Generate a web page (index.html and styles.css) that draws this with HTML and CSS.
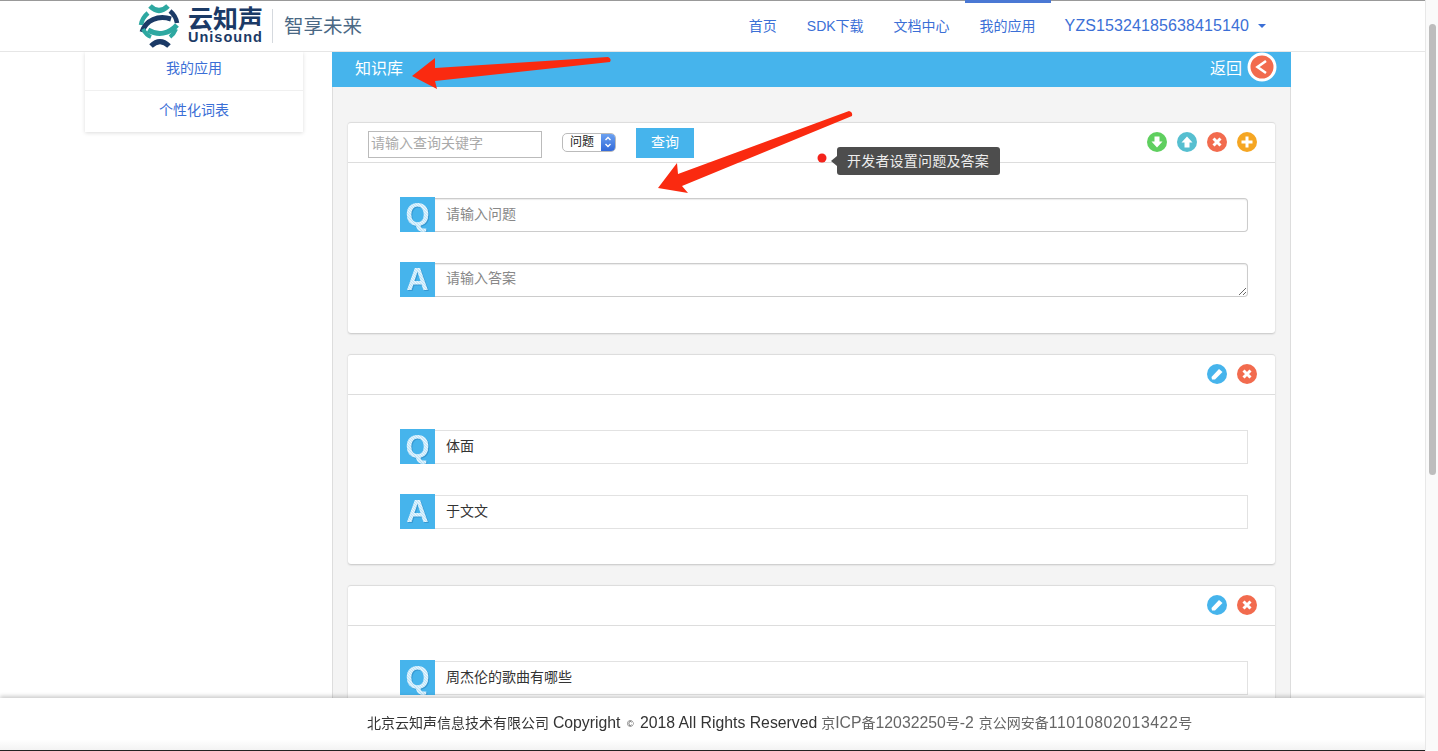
FILE: index.html
```html
<html>
  <head>
    <meta charset="utf-8">
    <link rel="stylesheet" href="styles.css">
    <title>知识库</title>
  </head>
  <body>
    <svg class="defs" width="0" height="0">
      <defs>
        <pattern id="hatch" width="2" height="2" patternUnits="userSpaceOnUse" patternTransform="rotate(45)">
          <rect width="2" height="2" fill="#f0f9fe"/>
          <rect width="2" height=".5" fill="#7ccaf2"/>
        </pattern>
      </defs>
    </svg>

    <div class="navbar">
      <a class="logo" href="#">
        <svg class="logo-mark" width="42" height="44" viewBox="0 0 42 44">
          <path d="M12 2 Q21 11 30 2" fill="none" stroke="#2ea8a1" stroke-width="5"/>
          <path d="M13 42 Q22 33 31 42" fill="none" stroke="#1b3a66" stroke-width="5"/>
          <path d="M10 9 Q4 14 3 21" fill="none" stroke="#2ea8a1" stroke-width="4.500"/>
          <path d="M4 28 C8 16 20 11 33 15" fill="none" stroke="#1b3a66" stroke-width="5"/>
          <path d="M32 7 Q38 12 39 19" fill="none" stroke="#1b3a66" stroke-width="4.500"/>
          <path d="M10 26 C20 32 31 30 39 21" fill="none" stroke="#2ea8a1" stroke-width="5"/>
          <path d="M5 25 Q8 31 13 33" fill="none" stroke="#2ea8a1" stroke-width="4"/>
          <path d="M38 25 Q36 30 32 33" fill="none" stroke="#2ea8a1" stroke-width="4"/>
        </svg>
        <span class="logo-name">
          <span class="logo-cn">云知声</span>
          <span class="logo-en">Unisound</span>
        </span>
        <span class="logo-slogan">智享未来</span>
      </a>
      <ul class="nav">
        <li><a href="#">首页</a></li>
        <li><a href="#">SDK下载</a></li>
        <li><a href="#">文档中心</a></li>
        <li class="active"><a href="#">我的应用</a></li>
        <li class="user"><a href="#">YZS15324185638415140<span class="caret"></span></a></li>
      </ul>
    </div>

    <div class="page">
      <div class="sidebar">
        <a href="#">我的应用</a>
        <a href="#">个性化词表</a>
      </div>
      <div class="main">
        <div class="main-head">
          <span>知识库</span>
          <a class="back" href="#">
            返回
            <svg width="30" height="30" viewBox="0 0 30 30">
              <circle cx="15" cy="15" r="13" fill="#f26b4e" stroke="#fff" stroke-width="3"/>
              <path d="M19 9 L10.500 15 L19 21" fill="none" stroke="#fff" stroke-width="2.600"/>
            </svg>
          </a>
        </div>
        <div class="main-body">

          <div class="card card-edit">
            <div class="card-head">
              <input class="search" placeholder="请输入查询关键字">
              <div class="fake-select">
                <span>问题</span>
                <i>
                  <svg width="14" height="18" viewBox="0 0 14 18"><path d="M4.500 7 L7 4.500 L9.500 7 M4.500 11 L7 13.500 L9.500 11" fill="none" stroke="#fff" stroke-width="1.400"/></svg>
                </i>
              </div>
              <button class="query">查询</button>
              <div class="actions">
                <svg class="act" viewBox="0 0 20 20"><circle cx="10" cy="10" r="10" fill="#5fcf5f"/><path d="M7.500 4.500h5v5h3L10 15.500 4.500 9.500h3z" fill="#fff"/></svg>
                <svg class="act" viewBox="0 0 20 20"><circle cx="10" cy="10" r="10" fill="#56bfd0"/><path d="M7.500 15.500h5v-5h3L10 4.500l-5.500 6h3z" fill="#fff"/></svg>
                <svg class="act" viewBox="0 0 20 20"><circle cx="10" cy="10" r="10" fill="#f26b4e"/><path d="M6.500 6.500l7 7M13.500 6.500l-7 7" stroke="#fff" stroke-width="3"/></svg>
                <svg class="act" viewBox="0 0 20 20"><circle cx="10" cy="10" r="10" fill="#f5a623"/><path d="M10 4.500v11M4.500 10h11" stroke="#fff" stroke-width="3"/></svg>
              </div>
            </div>
            <div class="card-body">
              <div class="row">
                <svg class="qa" viewBox="0 0 35 35"><rect width="35" height="35" fill="#46b4ec"/><text x="17.500" y="28.100" class="qa-letter" fill="url(#hatch)">Q</text></svg>
                <input class="field" placeholder="请输入问题">
              </div>
              <div class="row">
                <svg class="qa" viewBox="0 0 35 35"><rect width="35" height="35" fill="#46b4ec"/><text x="17.500" y="28.100" class="qa-letter" fill="url(#hatch)">A</text></svg>
                <textarea class="field" placeholder="请输入答案"></textarea>
              </div>
            </div>
          </div>

          <div class="card">
            <div class="card-head">
              <div class="actions">
                <svg class="act" viewBox="0 0 20 20"><circle cx="10" cy="10" r="10" fill="#46b4ec"/><path d="M4.500 13L12 5l3.500 3L8 15.500H5z" fill="#fff"/></svg>
                <svg class="act" viewBox="0 0 20 20"><circle cx="10" cy="10" r="10" fill="#f26b4e"/><path d="M6.500 6.500l7 7M13.500 6.500l-7 7" stroke="#fff" stroke-width="3"/></svg>
              </div>
            </div>
            <div class="card-body">
              <div class="row">
                <svg class="qa" viewBox="0 0 35 35"><rect width="35" height="35" fill="#46b4ec"/><text x="17.500" y="28.100" class="qa-letter" fill="url(#hatch)">Q</text></svg>
                <div class="value">体面</div>
              </div>
              <div class="row">
                <svg class="qa" viewBox="0 0 35 35"><rect width="35" height="35" fill="#46b4ec"/><text x="17.500" y="28.100" class="qa-letter" fill="url(#hatch)">A</text></svg>
                <div class="value">于文文</div>
              </div>
            </div>
          </div>

          <div class="card">
            <div class="card-head">
              <div class="actions">
                <svg class="act" viewBox="0 0 20 20"><circle cx="10" cy="10" r="10" fill="#46b4ec"/><path d="M4.500 13L12 5l3.500 3L8 15.500H5z" fill="#fff"/></svg>
                <svg class="act" viewBox="0 0 20 20"><circle cx="10" cy="10" r="10" fill="#f26b4e"/><path d="M6.500 6.500l7 7M13.500 6.500l-7 7" stroke="#fff" stroke-width="3"/></svg>
              </div>
            </div>
            <div class="card-body">
              <div class="row">
                <svg class="qa" viewBox="0 0 35 35"><rect width="35" height="35" fill="#46b4ec"/><text x="17.500" y="28.100" class="qa-letter" fill="url(#hatch)">Q</text></svg>
                <div class="value">周杰伦的歌曲有哪些</div>
              </div>
            </div>
          </div>

        </div>
      </div>
    </div>

    <!-- red arrows and the guide tip sit on top of the page -->
    <svg class="arrows" width="1438" height="751" viewBox="0 0 1438 751">
      <path d="M412 76 L435 58 L435 68 L608 57 Q612 59 610 62 L435 81 L437 89 Z" fill="#fa2a10"/>
      <path d="M658 188 L677 163 L678 174 L849 111 Q853 112 852 116 L682 186 L688 193 Z" fill="#fa2a10"/>
      <circle cx="822" cy="158" r="4.500" fill="#f4231b"/>
    </svg>
    <div class="tip">开发者设置问题及答案</div>

    <div class="footer">
      北京云知声信息技术有限公司 <span class="num">Copyright <small>©</small> 2018 All Rights Reserved</span>
      <span class="icp">京<span class="num">ICP</span>备<span class="num">12032250</span>号<span class="num">-2</span></span>
      <span class="icp icp-second">京公网安备<span class="num">11010802013422</span>号</span>
    </div>

    <div class="scrollbar"><div class="thumb"></div></div>
  </body>
</html>
```

FILE: styles.css
```css
* {
  box-sizing: border-box;
}
html, body {
  height: 100%;
  overflow: hidden;
}
body {
  margin: 0;
  background: #fff;
  color: #333;
  font-family: "Liberation Sans", "Noto Sans CJK SC", sans-serif;
  font-size: 14px;
}
a {
  color: #3b6fd6;
  text-decoration: none;
}
.defs {
  position: absolute;
}

/* top bar */
.navbar {
  position: fixed;
  top: 0;
  left: 0;
  right: 13px;
  height: 52px;
  display: flex;
  align-items: center;
  padding: 0 159px 0 138px;
  background: #fff;
  border-top: 1px solid #999;
  border-bottom: 1px solid #e6e6e6;
  z-index: 5;
}
.logo {
  display: flex;
  align-items: center;
}
.logo-name {
  display: flex;
  flex-direction: column;
  margin-left: 8px;
  padding-right: 9px;
  border-right: 1px solid #d5d9de;
  color: #1b3a66;
  font-weight: bold;
}
.logo-cn {
  margin-top: -2px;
  font-size: 25px;
  line-height: 25px;
}
.logo-en {
  font-size: 14.500px;
  line-height: 11px;
  letter-spacing: 1px;
}
.logo-slogan {
  margin-left: 11px;
  padding-bottom: 4px;
  font-size: 19.500px;
  color: #4a6884;
}
.nav {
  display: flex;
  align-items: stretch;
  height: 100%;
  margin: 0 0 0 auto;
  padding: 0;
  list-style: none;
}
.nav li {
  display: flex;
  align-items: center;
  padding: 0 15px 5px;
  border-top: 3px solid transparent;
  margin-top: -1px;
}
.nav li.active {
  border-top-color: #4a78d4;
}
.nav li.user {
  padding: 0 0 3px 14px;
  font-size: 16px;
  letter-spacing: .1px;
}
.caret {
  display: inline-block;
  margin-left: 9px;
  vertical-align: middle;
  border-top: 4px solid #3b6fd6;
  border-left: 4px solid transparent;
  border-right: 4px solid transparent;
}

/* page */
.page {
  display: flex;
  align-items: flex-start;
  gap: 29px;
  padding: 52px 0 0 85px;
}
.sidebar {
  width: 218px;
  flex: none;
  background: #fff;
  box-shadow: 0 1px 4px rgba(0, 0, 0, .14);
}
.sidebar a {
  display: block;
  height: 38px;
  line-height: 32px;
  text-align: center;
}
.sidebar a + a {
  height: 42px;
  line-height: 39px;
  border-top: 1px solid #f0f0f0;
}
.main {
  width: 959px;
  flex: none;
}
.main-head {
  height: 35px;
  display: flex;
  align-items: center;
  justify-content: space-between;
  padding: 0 14px 5px 23px;
  background: #46b4ec;
  color: #fff;
  font-size: 16px;
}
.back {
  display: flex;
  align-items: center;
  gap: 5px;
  color: #fff;
}
.main-body {
  padding: 35px 15px 0;
  background: #f4f4f4;
  border-left: 1px solid #ddd;
  border-right: 1px solid #ddd;
}
.card {
  margin-bottom: 21px;
  background: #fff;
  border-top: 1px solid #ddd;
  border-radius: 3px;
  box-shadow: 0 1px 2px rgba(0, 0, 0, .2);
}
.card-head {
  height: 40px;
  display: flex;
  align-items: center;
  padding: 0 18px 0 20px;
  border-bottom: 1px solid #ddd;
}
.search {
  width: 174px;
  height: 27px;
  margin-top: 4px;
  padding: 0 2px 4px;
  border: 1px solid #bbb;
  border-radius: 0;
  font: inherit;
  outline: none;
}
.search::placeholder {
  color: #aaa;
}
.fake-select {
  width: 54px;
  height: 19px;
  margin-left: 20px;
  display: flex;
  justify-content: space-between;
  border: 1px solid #bbb;
  border-radius: 5px;
  overflow: hidden;
  font-size: 12px;
  line-height: 16px;
  padding-left: 7px;
  color: #222;
}
.fake-select i {
  width: 15px;
  margin: -1px -1px -1px 0;
  background: linear-gradient(#6ea4f2, #2f66d8);
}
.query {
  width: 58px;
  height: 30px;
  margin: 1px 0 0 20px;
  padding: 0 0 5px;
  border: 0;
  border-radius: 0;
  background: #46b4ec;
  color: #fff;
  font: inherit;
}
.actions {
  display: flex;
  gap: 10px;
  margin: 0 0 2px auto;
}
.act {
  width: 20px;
  height: 20px;
}
.card-body {
  display: flex;
  flex-direction: column;
  gap: 31px;
  padding: 35px 27px 35px 52px;
}
.card-edit .card-body {
  padding-bottom: 36px;
}
.row {
  display: flex;
  height: 34px;
}
.qa {
  width: 35px;
  height: 35px;
  flex: none;
  margin-top: -1px;
}
.qa-letter {
  font-family: "Liberation Sans", sans-serif;
  font-size: 31px;
  font-weight: bold;
  text-anchor: middle;
  filter: drop-shadow(1px 1px 0 rgba(20, 90, 150, .3));
}
.field {
  flex: 1;
  height: 34px;
  padding: 0 11px 3px;
  border: 1px solid #ccc;
  border-left: 0;
  border-radius: 0 4px 4px 0;
  box-shadow: inset 0 1px 1px rgba(0, 0, 0, .08);
  font: inherit;
  line-height: 28px;
  outline: none;
}
.field::placeholder {
  color: #888;
}
.value {
  flex: 1;
  height: 34px;
  padding: 0 11px;
  border: 1px solid #e2e2e2;
  border-left: 0;
  line-height: 30px;
  color: #333;
}

/* annotations */
.arrows {
  position: fixed;
  top: 0;
  left: 0;
  z-index: 6;
  pointer-events: none;
}
.tip {
  position: fixed;
  left: 837px;
  top: 147px;
  width: 163px;
  height: 28px;
  padding-left: 10px;
  border-radius: 3px;
  background: #4d4d4d;
  color: #eee;
  line-height: 29px;
  letter-spacing: .2px;
  z-index: 6;
}
.tip::before {
  content: "";
  position: absolute;
  left: -6px;
  top: 9px;
  border-top: 5px solid transparent;
  border-bottom: 5px solid transparent;
  border-right: 6px solid #4d4d4d;
}

/* bottom bar */
.footer {
  position: fixed;
  left: 0;
  right: 13px;
  bottom: 0;
  height: 53px;
  padding-left: 367px;
  line-height: 50px;
  white-space: nowrap;
  background: linear-gradient(#fff 80%, #f3f3f3);
  border-bottom: 1px solid #222;
  box-shadow: 0 -2px 4px rgba(0, 0, 0, .2);
  z-index: 5;
}
.num {
  font-size: 15.800px;
}
.num small {
  margin: 0 2px;
  font-size: 9px;
  vertical-align: 1px;
}
.icp {
  color: #666;
}
.icp-second {
  margin-left: 1px;
}
.icp-second .num {
  letter-spacing: .55px;
}

/* painted scrollbar, the page itself does not scroll */
.scrollbar {
  position: fixed;
  top: 0;
  right: 0;
  bottom: 0;
  width: 13px;
  padding: 24px 2px 0 3px;
  background: #fafafa;
  border-left: 1px solid #e8e8e8;
  z-index: 7;
}
.thumb {
  height: 451px;
  border-radius: 4px;
  background: #bdbdbd;
}
```
